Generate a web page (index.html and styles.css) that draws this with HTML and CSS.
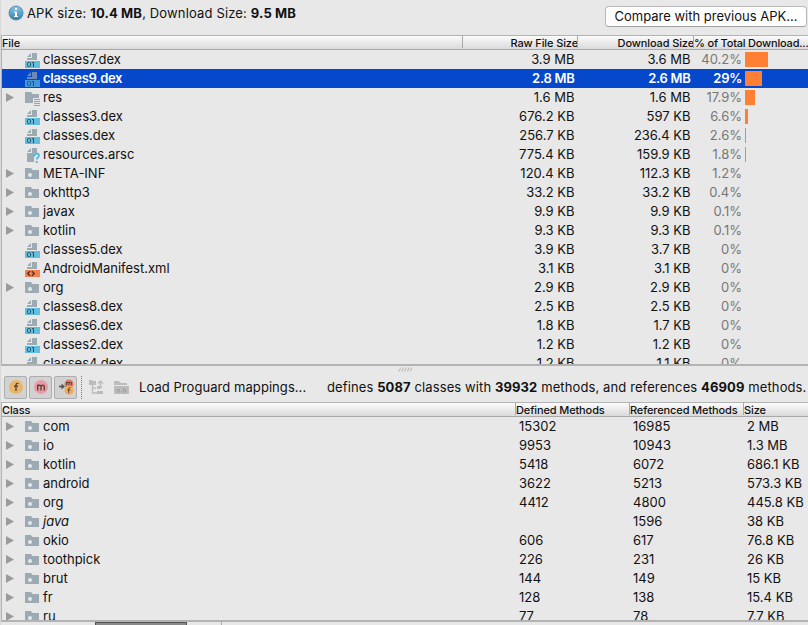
FILE: index.html
```html
<!DOCTYPE html>
<html lang="en">
<head>
<meta charset="utf-8">
<title>APK Analyzer</title>
<link rel="stylesheet" href="styles.css">
</head>
<body>
<svg class="defs" aria-hidden="true">
  <symbol id="dex" viewBox="0 0 16 16"><path d="M3 5 7 1v4zM8 1h5v7H3V6h5z" fill="#9baab3"/><path d="M1 9h15v7H1z" fill="#62bddf"/><rect x="3.500" y="10.500" width="3" height="4" rx="1" fill="none" stroke="#284f60"/><path d="M8 10.500h1.500V15" fill="none" stroke="#284f60"/></symbol>
  <symbol id="xml" viewBox="0 0 16 16"><path d="M3 5 7 1v4zM8 1h5v7H3V6h5z" fill="#9baab3"/><path d="M1 9h15v7H1z" fill="#f48152"/><path d="M6 10.300 3.500 12.500 6 14.700M7.800 10.300l2.500 2.200-2.500 2.200" fill="none" stroke="#4b2b20" stroke-width="1.200"/></symbol>
  <symbol id="arsc" viewBox="0 0 16 16"><path d="M3 5 7 1v4zM8 1h5v5h-3v9H3V6h5z" fill="#9baab3"/><path d="M10.500 9.500V8.200c0-2.200 4.500-2.200 4.500.300 0 2-2.300 1.800-2.300 4" fill="none" stroke="#40b6e0" stroke-width="1.600"/><path d="M11.800 14h1.800v1.800h-1.800z" fill="#40b6e0"/></symbol>
  <symbol id="res" viewBox="0 0 16 16"><path d="M1 2h6l1.500 2H15v4H9v5H1z" fill="#9baab3"/><path d="M10 9.500h6M10 11.500h6M10 13.500h6M10 15.500h6" stroke="#d49a3c"/></symbol>
  <symbol id="pkg" viewBox="0 0 16 16"><path fill-rule="evenodd" d="M1 2h6l1.500 2H15v9H1zM6 7a2 2 0 1 0 0 4A2 2 0 0 0 6 7" fill="#9baab3"/></symbol>
</svg>

<main class="analyzer">
  <header class="summary">
    <svg class="info" viewBox="0 0 16 16"><defs><linearGradient id="blue" x2="0" y2="1"><stop stop-color="#8dc5e2"/><stop offset="1" stop-color="#3181b1"/></linearGradient></defs><circle cx="8" cy="8" r="7" fill="url(#blue)" stroke="#3c7ca5" stroke-width=".8"/><path d="M7 3h2v2H7zM6 6.500h3V11h1v1H6v-1h1V7.500H6z" fill="#fff"/></svg>
    <p class="apk-size">APK size: <b>10.4 MB</b>, Download Size: <b>9.5 MB</b></p>
    <button class="compare"><span>Compare with previous APK...</span></button>
  </header>

  <section class="table files">
    <div class="head"><span>File</span><span class="r">Raw File Size</span><span class="r">Download Size</span><span class="total">% of Total Download...</span></div>
    <div class="body">
      <div class="row"><span class="name"><svg><use href="#dex"/></svg>classes7.dex</span><span>3.9 MB</span><span>3.6 MB</span><span class="pct">40.2%</span><i class="bar" style="width:23px"></i></div>
      <div class="row selected"><span class="name"><svg><use href="#dex"/></svg>classes9.dex</span><span>2.8 MB</span><span>2.6 MB</span><span class="pct">29%</span><i class="bar" style="width:17px"></i></div>
      <div class="row"><span class="name open"><svg><use href="#res"/></svg>res</span><span>1.6 MB</span><span>1.6 MB</span><span class="pct">17.9%</span><i class="bar" style="width:10px"></i></div>
      <div class="row"><span class="name"><svg><use href="#dex"/></svg>classes3.dex</span><span>676.2 KB</span><span>597 KB</span><span class="pct">6.6%</span><i class="bar" style="width:3px"></i></div>
      <div class="row"><span class="name"><svg><use href="#dex"/></svg>classes.dex</span><span>256.7 KB</span><span>236.4 KB</span><span class="pct">2.6%</span><i class="bar" style="width:1px"></i></div>
      <div class="row"><span class="name"><svg><use href="#arsc"/></svg>resources.arsc</span><span>775.4 KB</span><span>159.9 KB</span><span class="pct">1.8%</span><i class="bar" style="width:1px"></i></div>
      <div class="row"><span class="name open"><svg><use href="#pkg"/></svg>META-INF</span><span>120.4 KB</span><span>112.3 KB</span><span class="pct">1.2%</span></div>
      <div class="row"><span class="name open"><svg><use href="#pkg"/></svg>okhttp3</span><span>33.2 KB</span><span>33.2 KB</span><span class="pct">0.4%</span></div>
      <div class="row"><span class="name open"><svg><use href="#pkg"/></svg>javax</span><span>9.9 KB</span><span>9.9 KB</span><span class="pct">0.1%</span></div>
      <div class="row"><span class="name open"><svg><use href="#pkg"/></svg>kotlin</span><span>9.3 KB</span><span>9.3 KB</span><span class="pct">0.1%</span></div>
      <div class="row"><span class="name"><svg><use href="#dex"/></svg>classes5.dex</span><span>3.9 KB</span><span>3.7 KB</span><span class="pct">0%</span></div>
      <div class="row"><span class="name"><svg><use href="#xml"/></svg>AndroidManifest.xml</span><span>3.1 KB</span><span>3.1 KB</span><span class="pct">0%</span></div>
      <div class="row"><span class="name open"><svg><use href="#pkg"/></svg>org</span><span>2.9 KB</span><span>2.9 KB</span><span class="pct">0%</span></div>
      <div class="row"><span class="name"><svg><use href="#dex"/></svg>classes8.dex</span><span>2.5 KB</span><span>2.5 KB</span><span class="pct">0%</span></div>
      <div class="row"><span class="name"><svg><use href="#dex"/></svg>classes6.dex</span><span>1.8 KB</span><span>1.7 KB</span><span class="pct">0%</span></div>
      <div class="row"><span class="name"><svg><use href="#dex"/></svg>classes2.dex</span><span>1.2 KB</span><span>1.2 KB</span><span class="pct">0%</span></div>
      <div class="row"><span class="name"><svg><use href="#dex"/></svg>classes4.dex</span><span>1.2 KB</span><span>1.1 KB</span><span class="pct">0%</span></div>
    </div>
  </section>

  <div class="splitter"><svg viewBox="0 0 16 5"><path d="M1 4.500 3 .500M4 4.500 6 .500M7 4.500 9 .500M10 4.500l2-4M13 4.500l2-4" stroke="#8e8e8e" stroke-dasharray="1 .700"/></svg></div>

  <div class="toolbar">
    <button class="toggle"><svg viewBox="0 0 16 16"><circle cx="8" cy="8" r="7" fill="#e9b568"/><path d="M10.500 4.600c-1.700-.6-2.500.1-2.500 1.500V12M6 7.300h4" class="mark"/></svg></button>
    <button class="toggle"><svg viewBox="0 0 16 16"><circle cx="8" cy="8" r="7" fill="#e99aa7"/><path d="M4.700 11.500V5.500M4.700 7.500c.4-1.600 3.300-2 3.300.3v3.700M8 7.500c.4-1.600 3.300-2 3.300.3v3.700" class="mark"/></svg></button>
    <button class="toggle"><svg viewBox="0 0 16 16"><circle cx="11" cy="5" r="4.500" fill="#e77562"/><circle cx="11" cy="11.200" r="4.500" fill="#efad59"/><path d="M1 7.500h3" fill="none" stroke="#555" stroke-width="1.600"/><path d="M3.500 4.500 7 7.500 3.500 10.500z" fill="#555"/><path d="M8.500 6V3M8.500 3.500H13.500V6M11 3.500V6M12.500 8.700c-1.300-.3-1.800.1-1.800 1.200v4.300M9.500 11h3" class="mark thin"/></svg></button>
    <i class="divider"></i>
    <svg class="tool" viewBox="0 0 16 16"><path d="M1 1h3l1 1h3v4H1z" fill="#bcbcbc"/><path d="M4.500 6v8H9M4.500 9H8M10 8.500h4M10 13.500h4M12.500 8V2M10 4.500 12.500 2 15 4.500" fill="none" stroke="#bcbcbc" stroke-width="1.400"/><path d="M9 7h3v3H9zM9 12h6v3H9z" fill="#bcbcbc"/></svg>
    <svg class="tool" viewBox="0 0 16 16"><path d="M1 2h5l2 2h6v2H1zM1 7h15v8H1z" fill="#bcbcbc"/><path d="M4 10.500h2.500V13H4zM8 12.500h1M10.500 9v4H13v-2.500h-2.500" fill="none" stroke="#a2a2a2"/></svg>
    <span class="load">Load Proguard mappings...</span>
    <p class="stats">defines <b>5087</b> classes with <b>39932</b> methods, and references <b>46909</b> methods.</p>
  </div>

  <section class="table classes">
    <div class="head"><span>Class</span><span>Defined Methods</span><span>Referenced Methods</span><span>Size</span></div>
    <div class="body">
      <div class="row"><span class="name open"><svg><use href="#pkg"/></svg>com</span><span>15302</span><span>16985</span><span>2 MB</span></div>
      <div class="row"><span class="name open"><svg><use href="#pkg"/></svg>io</span><span>9953</span><span>10943</span><span>1.3 MB</span></div>
      <div class="row"><span class="name open"><svg><use href="#pkg"/></svg>kotlin</span><span>5418</span><span>6072</span><span>686.1 KB</span></div>
      <div class="row"><span class="name open"><svg><use href="#pkg"/></svg>android</span><span>3622</span><span>5213</span><span>573.3 KB</span></div>
      <div class="row"><span class="name open"><svg><use href="#pkg"/></svg>org</span><span>4412</span><span>4800</span><span>445.8 KB</span></div>
      <div class="row"><span class="name open"><svg><use href="#pkg"/></svg><em>java</em></span><span></span><span>1596</span><span>38 KB</span></div>
      <div class="row"><span class="name open"><svg><use href="#pkg"/></svg>okio</span><span>606</span><span>617</span><span>76.8 KB</span></div>
      <div class="row"><span class="name open"><svg><use href="#pkg"/></svg>toothpick</span><span>226</span><span>231</span><span>26 KB</span></div>
      <div class="row"><span class="name open"><svg><use href="#pkg"/></svg>brut</span><span>144</span><span>149</span><span>15 KB</span></div>
      <div class="row"><span class="name open"><svg><use href="#pkg"/></svg>fr</span><span>128</span><span>138</span><span>15.4 KB</span></div>
      <div class="row"><span class="name open"><svg><use href="#pkg"/></svg>ru</span><span>77</span><span>78</span><span>7.7 KB</span></div>
    </div>
  </section>
  <footer class="tabs"><i class="tab-active"></i><i class="tab"></i></footer>
</main>
</body>
</html>
```
FILE: styles.css
```css
* { box-sizing: border-box; }
body {
  margin: 0;
  background: #e8e8e8;
  color: #111;
  font: 13px/19px Inter, "Liberation Sans", sans-serif;
  overflow: hidden;
}
p { margin: 0; }
button { padding: 0; font: inherit; color: inherit; }
.defs { display: none; }
.analyzer {
  display: flex;
  flex-direction: column;
  width: 808px;
  height: 625px;
  border-left: 1px solid #d8d8d8;
  overflow: hidden;
  white-space: nowrap;
}

.summary { display: flex; flex: none; height: 35px; padding: 0 1px 0 7px; }
.info { width: 16px; height: 16px; margin: 5px 3px 0 0; }
.apk-size { margin-top: 4px; letter-spacing: .15px; }
.compare {
  width: 202px;
  height: 21px;
  margin: 6px 0 0 auto;
  background: #fff;
  border: 1px solid #b9b9b9;
  border-bottom-color: #a2a2a2;
  border-radius: 4px;
  line-height: 19px;
}

.table { display: flex; flex: none; flex-direction: column; border: solid #b3b3b3; border-width: 1px 0 2px 1px; overflow: hidden; }
.files { height: 331px; }
.classes { height: 220px; }
.head, .row { display: grid; flex: none; }
.files .head { grid-template-columns: 460px 115px 116px 1fr; }
.files .row { grid-template-columns: 461px 111.5px 116px 51.5px 1fr; }
.classes .head, .classes .row { grid-template-columns: 513px 114px 114px 1fr; }
.head {
  height: 14px;
  background: linear-gradient(#fbfbfb, #dadada);
  border-bottom: 1px solid #a8a8a8;
  font-size: 11px;
  font-weight: 500;
  line-height: 14px;
  letter-spacing: -.12px;
}
.head span + span { border-left: 1px solid #aaa; height: 12px; }
.head .total { letter-spacing: -.2px; }
.head .r { margin-right: -1px; text-align: right; }
.row { height: 19px; }
.files .row > span:not(.name) { text-align: right; }
.classes .row > span:not(.name) { padding-left: 4px; }
.name { display: flex; padding-left: 22px; }
.name svg { width: 16px; height: 16px; margin: 2px 3px 0 0; }
.name.open { padding-left: 4px; }
.name.open::before {
  content: "";
  margin: 5px 10px 0 0;
  width: 8px;
  height: 9px;
  background: #9b9b9b;
  clip-path: polygon(0 0, 100% 50%, 0 100%);
}
.pct { color: #777; }
.bar { height: 15px; margin: 2px 0 0 3px; background: #ff8033; }
.selected { background: #0648cb; color: #fff; font-weight: 600; letter-spacing: -.28px; }
.selected .pct { color: #fff; }
.selected .name svg { opacity: .68; }

.splitter { flex: none; height: 6px; display: flex; justify-content: center; }
.splitter svg { width: 15px; height: 5px; margin: 1px 0 0 2px; }
.toolbar { flex: none; display: flex; align-items: center; height: 30px; padding-left: 3px; }
.toggle {
  display: flex;
  align-items: center;
  justify-content: center;
  width: 23px;
  height: 23px;
  margin-right: 2px;
  background: #d2d2d2;
  border: 1px solid #adadad;
  border-radius: 2px;
}
.toggle svg { flex: none; width: 16px; height: 16px; }
.mark { fill: none; stroke: #5b4638; stroke-width: 1.4; }
.thin { stroke-width: 1; }
.divider { height: 23px; margin: 0 6px 0 2px; border-left: 1px dotted #777; }
.tool { width: 16px; height: 16px; margin-right: 9px; }
.load { width: 188px; margin-left: 1px; letter-spacing: .06px; }
.stats { letter-spacing: .11px; }

.tabs { display: flex; flex: none; height: 3px; padding-left: 94px; }
.tab-active { width: 92px; background: #898989; border: 1px solid #555; border-bottom: 0; }
.tab { width: 35px; border-right: 1px solid #aaa; }
```
